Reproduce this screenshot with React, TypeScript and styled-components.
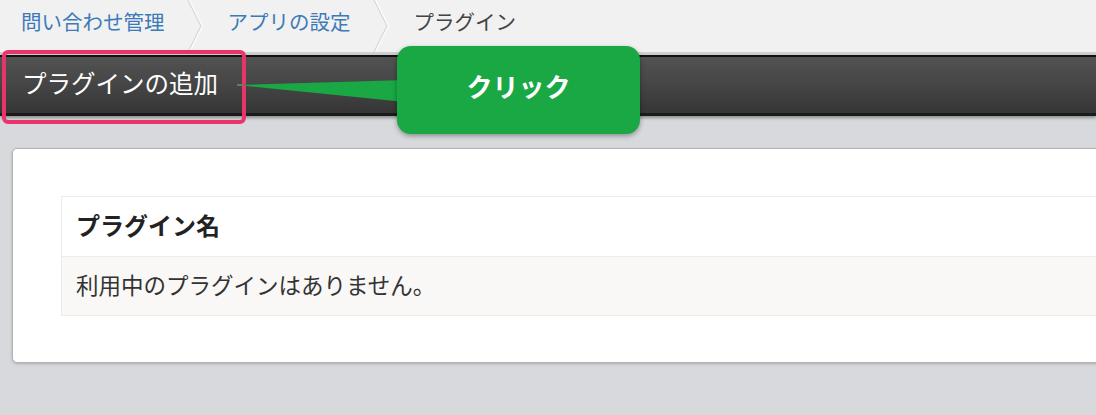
import styled, { createGlobalStyle } from 'styled-components'

const GlobalStyle = createGlobalStyle`
    body {
        margin: 0;
        overflow: hidden;
        background: #d8d9dc;
        font-family: "Noto Sans CJK JP", "Noto Sans", sans-serif;
    }
`;

const Page = styled.div`
    position: relative;
    width: 1096px;
    height: 415px;
    overflow: hidden;
`;

const Breadcrumb = styled.nav`
    display: flex;
    align-items: center;
    height: 52px;
    padding-left: 21px;
    background: #f1f1f1;
    border-bottom: 3px solid #cfcfcf;
`;

const Crumb = styled.span<{ $current?: boolean }>`
    font-size: 20.5px;
    line-height: 1;
    margin-top: -9px;
    white-space: nowrap;
    color: ${({ $current }) => ($current ? '#444' : '#3c7bb8')};
`;

const Separator = styled.svg`
    flex: none;
    width: 63px;
    height: 52px;
`;

const ToolBar = styled.div`
    display: flex;
    align-items: center;
    height: 56px;
    padding-left: 22px;
    border-top: 2px solid #111;
    border-bottom: 3px solid #1b1b1b;
    background: linear-gradient(180deg, #525252 0%, #454545 50%, #353535 100%);
    box-shadow: 0 2px 3px rgba(0, 0, 0, 0.35);
`;

const ToolTitle = styled.span`
    font-size: 24.5px;
    line-height: 1;
    margin-top: -3px;
    color: #fff;
    white-space: nowrap;
`;

const Highlight = styled.div`
    position: absolute;
    left: 2px;
    top: 50px;
    width: 236px;
    height: 66px;
    border: 4px solid #e8336b;
    border-radius: 6px;
`;

const CalloutTail = styled.svg`
    position: absolute;
    left: 230px;
    top: 70px;
    width: 180px;
    height: 40px;
`;

const Callout = styled.div`
    position: absolute;
    left: 397px;
    top: 46px;
    width: 243px;
    height: 88px;
    display: flex;
    align-items: center;
    justify-content: center;
    padding-bottom: 10px;
    box-sizing: border-box;
    background: #19a843;
    border-radius: 14px;
    box-shadow: 0 2px 5px rgba(0, 0, 0, 0.35);
    color: #fff;
    font-size: 26px;
    font-weight: 700;
`;

const Content = styled.main`
    padding: 32px 0 0 12px;
`;

const Card = styled.section`
    width: 1130px;
    padding: 47px 0 46px 48px;
    background: #fff;
    border: 1px solid #b3b3b3;
    border-radius: 5px;
    box-shadow: 0 1px 3px rgba(0, 0, 0, 0.2);
`;

const Table = styled.div`
    border: 1px solid #ececec;
    border-right: none;
`;

const Row = styled.div<{ $head?: boolean }>`
    display: flex;
    align-items: center;
    height: 59px;
    padding: 0 0 5px 14px;
    box-sizing: border-box;
    background: ${({ $head }) => ($head ? '#fff' : '#f9f8f6')};
    border-top: ${({ $head }) => ($head ? 'none' : '1px solid #ececec')};
    font-size: ${({ $head }) => ($head ? '24px' : '22.5px')};
    font-weight: ${({ $head }) => ($head ? 700 : 400)};
    color: ${({ $head }) => ($head ? '#222' : '#333')};
`;

const Chevron = () => (
    <Separator viewBox="0 0 63 52">
        <polyline points="23,0 36,26 23,52" fill="none" stroke="#d9d9d9" strokeWidth="1.5" />
        <polyline points="24.5,0 37.5,26 24.5,52" fill="none" stroke="#fafafa" strokeWidth="1.5" />
    </Separator>
);

export default function App() {
    return (
        <>
            <GlobalStyle />
            <Page>
                <Breadcrumb>
                    <Crumb>問い合わせ管理</Crumb>
                    <Chevron />
                    <Crumb>アプリの設定</Crumb>
                    <Chevron />
                    <Crumb $current>プラグイン</Crumb>
                </Breadcrumb>
                <ToolBar>
                    <ToolTitle>プラグインの追加</ToolTitle>
                </ToolBar>
                <Content>
                    <Card>
                        <Table>
                            <Row $head>プラグイン名</Row>
                            <Row>利用中のプラグインはありません。</Row>
                        </Table>
                    </Card>
                </Content>
                <Highlight />
                <CalloutTail viewBox="0 0 180 40">
                    <polygon points="7,15 175,10 175,32" fill="#19a843" />
                    <line x1="7" y1="15" x2="12" y2="15" stroke="#9a9a9a" strokeWidth="1" />
                </CalloutTail>
                <Callout>クリック</Callout>
            </Page>
        </>
    );
}
